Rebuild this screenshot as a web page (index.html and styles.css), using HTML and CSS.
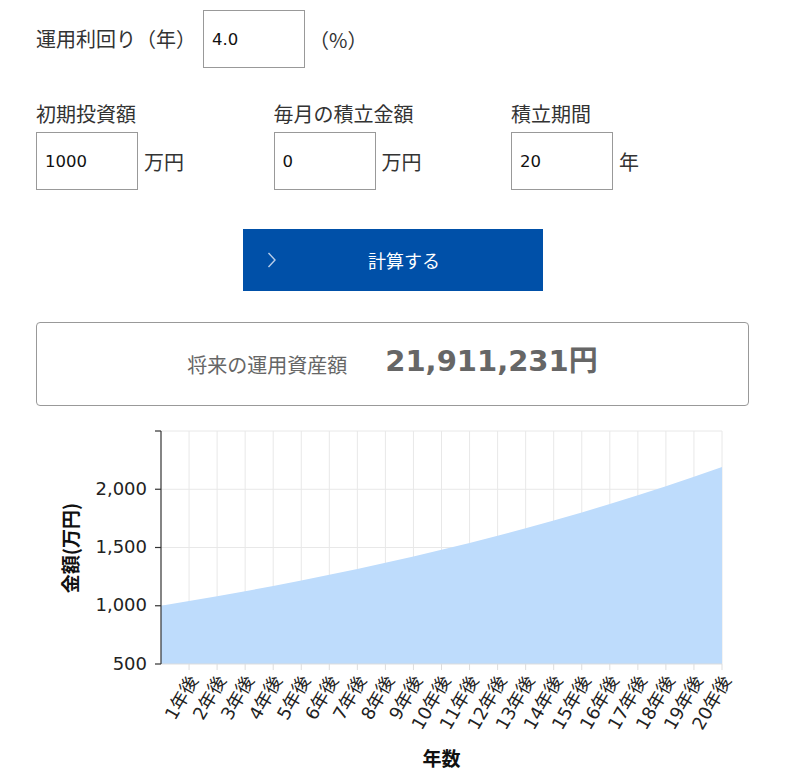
FILE: index.html
```html
<!DOCTYPE html>
<html lang="ja">
<head>
    <meta charset="UTF-8">
    <meta name="viewport" content="width=device-width, initial-scale=1.0">
    <title>積立シミュレーション</title>
    <link rel="stylesheet" href="styles.css">
</head>
<body>
    <main class="simulator">
        <div class="rate-row">
            <label class="label-text" for="rate">運用利回り（年）</label>
            <input class="num-input" type="text" id="rate" value="4.0">
            <span class="unit">（%）</span>
        </div>

        <div class="fields">
            <div class="field">
                <label class="label-text" for="initial">初期投資額</label>
                <div class="field-body">
                    <input class="num-input" type="text" id="initial" value="1000">
                    <span class="unit">万円</span>
                </div>
            </div>
            <div class="field">
                <label class="label-text" for="monthly">毎月の積立金額</label>
                <div class="field-body">
                    <input class="num-input" type="text" id="monthly" value="0">
                    <span class="unit">万円</span>
                </div>
            </div>
            <div class="field">
                <label class="label-text" for="years">積立期間</label>
                <div class="field-body">
                    <input class="num-input" type="text" id="years" value="20">
                    <span class="unit">年</span>
                </div>
            </div>
        </div>

        <button type="button" class="calc-btn" id="calc">
            <svg class="chevron" width="10" height="18" viewBox="0 0 10 18">
                <polyline points="1.5,2 8,9 1.5,16" fill="none" stroke="currentColor" stroke-width="1.4"/>
            </svg>
            <span>計算する</span>
        </button>

        <div class="result">
            <span class="result-label">将来の運用資産額</span>
            <span class="result-value" id="result">21,911,231円</span>
        </div>

        <div class="chart">
            <svg id="chart" width="713" height="349" viewBox="0 0 713 349"></svg>
        </div>
    </main>

    <script>
        const NS = 'http://www.w3.org/2000/svg';
        const plot = { left: 125, right: 686, top: 10, bottom: 243 };

        function comma(n) {
            return String(Math.round(n)).replace(/\B(?=(\d{3})+(?!\d))/g, ',');
        }

        function el(name, attrs, text) {
            const node = document.createElementNS(NS, name);
            for (const key in attrs) node.setAttribute(key, attrs[key]);
            if (text) node.textContent = text;
            return node;
        }

        // yearly balances in 万円, index 0 = start
        function simulate(rate, initial, monthly, years) {
            const values = [initial];
            let balance = initial;
            for (let i = 1; i <= years; i++) {
                balance = balance * (1 + rate / 100) + monthly * 12;
                values.push(balance);
            }
            return values;
        }

        function drawChart(values) {
            const svg = document.getElementById('chart');
            svg.innerHTML = '';
            const years = values.length - 1;
            const step = 500;
            const yMin = Math.max(0, Math.floor(Math.min(...values) / step) * step - step);
            const yMax = Math.ceil(Math.max(...values) / step) * step;

            const x = i => plot.left + (plot.right - plot.left) * i / years;
            const y = v => plot.bottom - (v - yMin) / (yMax - yMin) * (plot.bottom - plot.top);

            // grid
            for (let v = yMin + step; v <= yMax; v += step) {
                svg.appendChild(el('line', { class: 'grid', x1: plot.left, x2: plot.right, y1: y(v), y2: y(v) }));
            }
            for (let i = 1; i <= years; i++) {
                svg.appendChild(el('line', { class: 'grid', x1: x(i), x2: x(i), y1: plot.top, y2: plot.bottom }));
            }

            // area
            let d = `M${plot.left},${plot.bottom}`;
            values.forEach((v, i) => { d += ` L${x(i).toFixed(2)},${y(v).toFixed(2)}`; });
            d += ` L${x(years)},${plot.bottom} Z`;
            svg.appendChild(el('path', { class: 'area', d: d }));

            // x axis
            svg.appendChild(el('line', { class: 'x-axis', x1: plot.left, x2: plot.right, y1: plot.bottom, y2: plot.bottom }));
            for (let i = 1; i <= years; i++) {
                svg.appendChild(el('line', { class: 'x-axis', x1: x(i), x2: x(i), y1: plot.bottom, y2: plot.bottom + 6 }));
                const tx = x(i) + 4;
                const ty = plot.bottom + 13;
                svg.appendChild(el('text', {
                    class: 'x-label', x: tx, y: ty, 'text-anchor': 'end',
                    'dominant-baseline': 'central', transform: `rotate(-60 ${tx} ${ty})`
                }, `${i}年後`));
            }

            // y axis
            svg.appendChild(el('line', { class: 'y-axis', x1: plot.left, x2: plot.left, y1: plot.top, y2: plot.bottom }));
            for (let v = yMin; v <= yMax; v += step) {
                svg.appendChild(el('line', { class: 'y-axis', x1: plot.left - 6, x2: plot.left, y1: y(v), y2: y(v) }));
                if (v < yMax) {
                    svg.appendChild(el('text', {
                        class: 'y-label', x: plot.left - 14, y: y(v) - 1,
                        'text-anchor': 'end', 'dominant-baseline': 'central'
                    }, comma(v)));
                }
            }

            // axis titles
            svg.appendChild(el('text', {
                class: 'axis-title', x: 33, y: 127, 'text-anchor': 'middle',
                'dominant-baseline': 'central', transform: 'rotate(-90 33 127)'
            }, '金額(万円)'));
            svg.appendChild(el('text', {
                class: 'axis-title', x: (plot.left + plot.right) / 2, y: 336,
                'text-anchor': 'middle', 'dominant-baseline': 'central'
            }, '年数'));
        }

        function calculate() {
            const rate = parseFloat(document.getElementById('rate').value) || 0;
            const initial = parseFloat(document.getElementById('initial').value) || 0;
            const monthly = parseFloat(document.getElementById('monthly').value) || 0;
            const years = parseInt(document.getElementById('years').value, 10) || 1;
            const values = simulate(rate, initial, monthly, years);
            document.getElementById('result').textContent = comma(values[years] * 10000) + '円';
            drawChart(values);
        }

        document.getElementById('calc').addEventListener('click', calculate);
        calculate();
    </script>
</body>
</html>
```

FILE: styles.css
```css
* {
    margin: 0;
    padding: 0;
    box-sizing: border-box;
}

body {
    font-family: "Noto Sans CJK JP", sans-serif;
    color: #333;
    background-color: #fff;
}

.simulator {
    width: 713px;
    margin-left: 36px;
    padding-top: 10px;
}

.label-text {
    font-size: 20px;
    line-height: 30px;
}

.rate-row {
    display: flex;
    align-items: center;
}

.rate-row .label-text {
    margin-right: 7px;
}

.num-input {
    width: 102px;
    height: 58px;
    border: 1px solid #999;
    border-radius: 0;
    padding: 0 8px;
    font-family: "DejaVu Sans", sans-serif;
    font-size: 16.5px;
    color: #111;
    background-color: #fff;
}

.unit {
    font-size: 20px;
    margin-left: 6px;
}

.rate-row .unit {
    margin-left: 4px;
}

.fields {
    display: flex;
    margin-top: 31px;
}

.field {
    width: 237.5px;
}

.field .label-text {
    display: block;
    margin-bottom: 3px;
}

.field-body {
    display: flex;
    align-items: center;
}

.calc-btn {
    display: grid;
    grid-template-columns: 10px 1fr;
    align-items: center;
    width: 300px;
    height: 62px;
    margin: 39px auto 0;
    padding: 0 11px 0 24px;
    border: none;
    background-color: #0050a8;
    color: #fff;
    font-family: inherit;
    font-size: 18px;
    cursor: pointer;
}

.chevron {
    display: block;
    color: #b8cde9;
}

.result {
    display: flex;
    justify-content: center;
    align-items: center;
    gap: 38px;
    height: 84px;
    margin-top: 31px;
    border: 1px solid #999;
    border-radius: 4px;
}

.result-label {
    font-size: 20px;
    color: #666;
}

.result-value {
    margin-bottom: 12px;
    font-family: "DejaVu Sans", "Noto Sans CJK JP", sans-serif;
    font-size: 29px;
    font-weight: bold;
    color: #666;
}

.chart {
    margin-top: 15px;
}

.chart svg {
    display: block;
}

.grid {
    stroke: #e8e8e8;
    stroke-width: 1;
}

.area {
    fill: #bedcfc;
}

.x-axis {
    stroke: #ddd;
    stroke-width: 1;
}

.y-axis {
    stroke: #333;
    stroke-width: 1.2;
}

.y-label {
    font-family: "DejaVu Sans", sans-serif;
    font-size: 18px;
    fill: #222;
}

.x-label {
    font-family: "DejaVu Sans", "Noto Sans CJK JP", sans-serif;
    font-size: 18px;
    fill: #222;
}

.axis-title {
    font-family: "Noto Sans CJK JP", sans-serif;
    font-size: 19px;
    font-weight: bold;
    fill: #111;
}
```
